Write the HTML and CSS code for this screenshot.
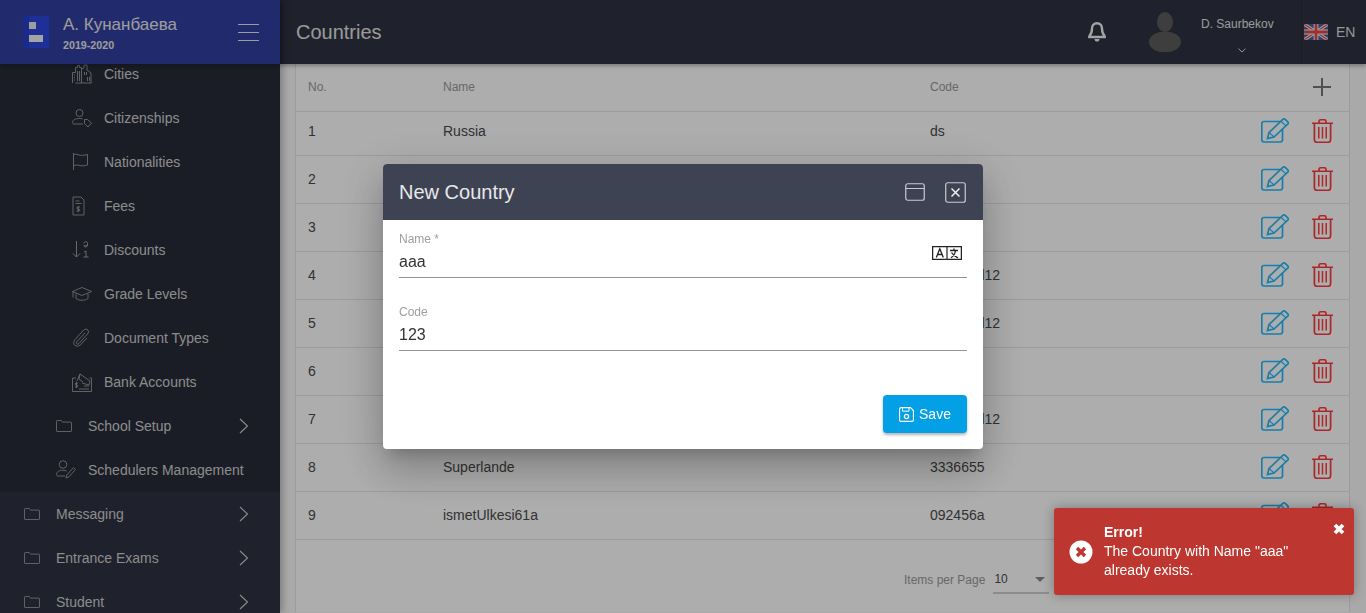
FILE: index.html
```html
<!DOCTYPE html>
<html lang="en">

<head>
    <meta charset="UTF-8">
    <title>Countries</title>
    <link rel="stylesheet" href="styles.css">
</head>

<body>
    <svg class="sprites" xmlns="http://www.w3.org/2000/svg">
        <symbol id="i-folder" viewBox="0 0 16 12">
            <path d="M.5 11V1.200C.5.800.8.500 1.200.500h4l1.300 1.600h8.300c.4 0 .7.300.7.700V11c0 .3-.3.500-.6.500H1c-.3 0-.5-.2-.5-.5z" fill="none" stroke="currentColor" stroke-width=".8" />
        </symbol>
        <symbol id="i-chevron" viewBox="0 0 10 16">
            <path d="M1 1l7.500 7L1 15" fill="none" stroke="currentColor" stroke-width="1.100" />
        </symbol>
        <symbol id="i-edit" viewBox="0 0 28 25">
            <path d="M19 3.500H3C1.600 3.500.8 4.300.8 5.700v16.100c0 1.400.8 2.200 2.200 2.200h16.300c1.400 0 2.200-.8 2.200-2.200V11" fill="none" stroke="currentColor" stroke-width="1.700" />
            <path d="M6.500 20.500l1.500-6L21.800 1.500c.8-.7 1.700-.7 2.500 0l2.400 2.300c.7.800.7 1.700 0 2.400L13 19z" fill="none" stroke="currentColor" stroke-width="1.700" />
            <path d="M8.200 14.500l4.800 4.500M20 3.200l5 4.700" fill="none" stroke="currentColor" stroke-width="1.200" />
        </symbol>
        <symbol id="i-trash" viewBox="0 0 21 24">
            <path d="M0 4.200h21M7 4V2.500C7 1.400 7.900.7 9 .7h3c1.100 0 2 .7 2 1.800V4" fill="none" stroke="currentColor" stroke-width="1.600" />
            <path d="M2.400 4.500v16.300c0 1.500.9 2.500 2.400 2.500h11.400c1.500 0 2.400-1 2.400-2.500V4.500" fill="none" stroke="currentColor" stroke-width="1.700" />
            <path d="M6.800 8v11.500M10.500 8v11.500M14.200 8v11.500" fill="none" stroke="currentColor" stroke-width="1.500" />
        </symbol>
    </svg>

    <div class="app">
        <aside class="sidebar">
            <div class="brand">
                <svg class="brand-logo" viewBox="0 0 26 32" xmlns="http://www.w3.org/2000/svg">
                    <rect width="26" height="32" fill="#2d48e0" />
                    <rect width="6" height="32" fill="#2640c8" />
                    <rect x="6" y="6" width="7" height="7" fill="#e8e8e8" />
                    <rect x="6" y="19" width="14" height="7" fill="#f2f2f2" />
                </svg>
                <div class="brand-text">
                    <div class="brand-name">А. Кунанбаева</div>
                    <div class="brand-year">2019-2020</div>
                </div>
                <div class="burger"><span></span><span></span><span></span></div>
            </div>

            <nav class="nav">
                <div class="nav-nested">
                    <a class="nav-item level-3">
                        <svg class="nav-icon" viewBox="0 0 20 20" fill="none" stroke="currentColor" stroke-width=".8">
                            <path d="M.5 19V8.500h3V3.500h2V1.500h2v2h2v15.500M10 5l2-1V1h3v5l4 3v10M3.500 19h16M2 11h1M2 13.500h1M2 16h1M5.500 7v10M7.500 7v10M12.500 8v3M14.500 8v3M15.500 13v4M17.500 13v4" />
                        </svg>
                        <span>Cities</span>
                    </a>
                    <a class="nav-item level-3">
                        <svg class="nav-icon" viewBox="0 0 20 20" fill="none" stroke="currentColor" stroke-width=".8">
                            <circle cx="7.500" cy="5" r="3.500" />
                            <path d="M11 16H2c-.9 0-1.500-.6-1.500-1.400 0-2.500 2.500-4.100 7-4.100 1.200 0 2.300.1 3.200.4" />
                            <path d="M12.500 11.500h3l4 3.500-3.500 4-3.500-3.400z" />
                        </svg>
                        <span>Citizenships</span>
                    </a>
                    <a class="nav-item level-3">
                        <svg class="nav-icon" viewBox="0 0 20 20" fill="none" stroke="currentColor" stroke-width=".8">
                            <path d="M1.500 1v17M1.500 2.500c3-1 4 .5 7 .8s4.500-.3 7-.8V13c-3 .8-4.500 1-7 .6s-4-1-7 0" />
                        </svg>
                        <span>Nationalities</span>
                    </a>
                    <a class="nav-item level-3">
                        <svg class="nav-icon" viewBox="0 0 20 20" fill="none" stroke="currentColor" stroke-width=".8">
                            <path d="M1 1h8l3 3v15H1zM3.500 5h4M3.500 7.500h6" />
                            <path d="M8 11h-2.500c-1 0-1 2 0 2h1.500c1 0 1 2 0 2H4.500M6.200 10v6" />
                        </svg>
                        <span>Fees</span>
                    </a>
                    <a class="nav-item level-3">
                        <svg class="nav-icon" viewBox="0 0 20 20" fill="none" stroke="currentColor" stroke-width=".9">
                            <path d="M4.500 1v16M1 13.500L4.500 17 8 13.500M12 3.500c0-2.600 3.500-2.600 3.500 0v1.500c0 2.500-3.500 2.500-3.500 .5M15.500 5c-.5 1-3 1-3.500 0M12 12l2-1v6M11.500 17h5" />
                        </svg>
                        <span>Discounts</span>
                    </a>
                    <a class="nav-item level-3">
                        <svg class="nav-icon" viewBox="0 0 20 20" fill="none" stroke="currentColor" stroke-width=".8">
                            <path d="M.5 7.500L10 3.500l9.500 4-9.500 4zM4 9.500v5c3 2.400 9 2.400 12 0v-5M1 8v5.500" />
                        </svg>
                        <span>Grade Levels</span>
                    </a>
                    <a class="nav-item level-3">
                        <svg class="nav-icon" viewBox="0 0 20 20" fill="none" stroke="currentColor" stroke-width=".8">
                            <path d="M13 5L5 13.500c-1.500 2 .5 3.500 2 2L15.500 6c3-3.500-1.500-6.500-4-3.800L3 11.500c-3.800 4.500 1.500 9 5.500 5.300L15 10" />
                        </svg>
                        <span>Document Types</span>
                    </a>
                    <a class="nav-item level-3">
                        <svg class="nav-icon" viewBox="0 0 20 20" fill="none" stroke="currentColor" stroke-width=".8">
                            <path d="M4 6H.5v13.500h19V6h-2M5 9l3-7 10 7-1 4-7-2M8 2l-1 5 4 3M12 14l5 0M7 17h10" />
                            <path d="M6 11H4c-1 0-1 2 0 2h1c1 0 1 2 0 2H3M4.500 10v6" />
                        </svg>
                        <span>Bank Accounts</span>
                    </a>
                    <a class="nav-item level-2">
                        <svg class="nav-folder"><use href="#i-folder" /></svg>
                        <span>School Setup</span>
                        <svg class="nav-chevron"><use href="#i-chevron" /></svg>
                    </a>
                    <a class="nav-item level-2">
                        <svg class="nav-icon" viewBox="0 0 20 20" fill="none" stroke="currentColor" stroke-width=".8">
                            <circle cx="7" cy="4.500" r="3.800" />
                            <path d="M9 16H2c-.9 0-1.500-.6-1.500-1.400 0-2.700 2.500-4.300 6.500-4.300 1.500 0 2.800.3 3.700.7" />
                            <path d="M10 18l.8-3 6.200-7c.6-.6 2.700 1 2.200 1.800l-6.200 7z" />
                        </svg>
                        <span>Schedulers Management</span>
                    </a>
                </div>
                <a class="nav-item level-1">
                    <svg class="nav-folder"><use href="#i-folder" /></svg>
                    <span>Messaging</span>
                    <svg class="nav-chevron"><use href="#i-chevron" /></svg>
                </a>
                <a class="nav-item level-1">
                    <svg class="nav-folder"><use href="#i-folder" /></svg>
                    <span>Entrance Exams</span>
                    <svg class="nav-chevron"><use href="#i-chevron" /></svg>
                </a>
                <a class="nav-item level-1">
                    <svg class="nav-folder"><use href="#i-folder" /></svg>
                    <span>Student</span>
                    <svg class="nav-chevron"><use href="#i-chevron" /></svg>
                </a>
            </nav>
        </aside>

        <div class="main">
            <header class="topbar">
                <h1 class="page-title">Countries</h1>
                <svg class="bell" viewBox="0 0 18 20" xmlns="http://www.w3.org/2000/svg">
                    <path d="M9 1.200c-3.200 0-5 2.300-5 5.300 0 4-1 6-2.700 7.800v.7h15.400v-.7C15 12.500 14 10.500 14 6.500c0-3-1.800-5.300-5-5.300z" fill="none" stroke="currentColor" stroke-width="2.400" />
                    <path d="M6.500 17h5c0 1.600-1 2.600-2.500 2.600S6.500 18.600 6.500 17z" fill="currentColor" />
                </svg>
                <svg class="avatar" viewBox="0 0 34 40" xmlns="http://www.w3.org/2000/svg">
                    <ellipse cx="17" cy="10" rx="8" ry="10" fill="#5c5c5c" />
                    <ellipse cx="17" cy="30" rx="16" ry="10.500" fill="#5c5c5c" />
                </svg>
                <div class="user">
                    <div class="user-name">D. Saurbekov</div>
                    <svg class="user-caret" viewBox="0 0 8 5" xmlns="http://www.w3.org/2000/svg">
                        <path d="M.5.700L4 4 7.500.700" fill="none" stroke="currentColor" />
                    </svg>
                </div>
                <div class="lang">
                    <svg class="flag" viewBox="0 0 60 40" xmlns="http://www.w3.org/2000/svg">
                        <rect width="60" height="40" fill="#4a5a9c" />
                        <path d="M0 0l60 40M60 0L0 40" stroke="#ececec" stroke-width="8" />
                        <path d="M0 0l60 40M60 0L0 40" stroke="#e04a4a" stroke-width="3" />
                        <path d="M30 0v40M0 20h60" stroke="#ececec" stroke-width="12" />
                        <path d="M30 0v40M0 20h60" stroke="#e04a4a" stroke-width="7" />
                    </svg>
                    <span>EN</span>
                </div>
            </header>

            <section class="content">
                <div class="card">
                    <div class="row row-head">
                        <div>No.</div>
                        <div>Name</div>
                        <div>Code</div>
                        <div class="add-cell"><span class="add-btn"></span></div>
                    </div>
                    <div class="row row-clipped">
                        <div>1</div>
                        <div>Russia</div>
                        <div>ds</div>
                        <div class="actions"><svg class="edit"><use href="#i-edit" /></svg><svg class="trash"><use href="#i-trash" /></svg></div>
                    </div>
                    <div class="row">
                        <div>2</div>
                        <div></div>
                        <div></div>
                        <div class="actions"><svg class="edit"><use href="#i-edit" /></svg><svg class="trash"><use href="#i-trash" /></svg></div>
                    </div>
                    <div class="row">
                        <div>3</div>
                        <div></div>
                        <div></div>
                        <div class="actions"><svg class="edit"><use href="#i-edit" /></svg><svg class="trash"><use href="#i-trash" /></svg></div>
                    </div>
                    <div class="row">
                        <div>4</div>
                        <div></div>
                        <div>123123d12</div>
                        <div class="actions"><svg class="edit"><use href="#i-edit" /></svg><svg class="trash"><use href="#i-trash" /></svg></div>
                    </div>
                    <div class="row">
                        <div>5</div>
                        <div></div>
                        <div>123123d12</div>
                        <div class="actions"><svg class="edit"><use href="#i-edit" /></svg><svg class="trash"><use href="#i-trash" /></svg></div>
                    </div>
                    <div class="row">
                        <div>6</div>
                        <div></div>
                        <div></div>
                        <div class="actions"><svg class="edit"><use href="#i-edit" /></svg><svg class="trash"><use href="#i-trash" /></svg></div>
                    </div>
                    <div class="row">
                        <div>7</div>
                        <div></div>
                        <div>123123d12</div>
                        <div class="actions"><svg class="edit"><use href="#i-edit" /></svg><svg class="trash"><use href="#i-trash" /></svg></div>
                    </div>
                    <div class="row">
                        <div>8</div>
                        <div>Superlande</div>
                        <div>3336655</div>
                        <div class="actions"><svg class="edit"><use href="#i-edit" /></svg><svg class="trash"><use href="#i-trash" /></svg></div>
                    </div>
                    <div class="row">
                        <div>9</div>
                        <div>ismetUlkesi61a</div>
                        <div>092456a</div>
                        <div class="actions"><svg class="edit"><use href="#i-edit" /></svg><svg class="trash"><use href="#i-trash" /></svg></div>
                    </div>
                    <div class="paginator">
                        <span class="page-label">Items per Page</span>
                        <div class="page-select"><span>10</span><i class="page-arrow"></i></div>
                    </div>
                </div>
            </section>
        </div>
    </div>

    <div class="backdrop">
        <div class="dialog">
            <div class="dialog-head">
                <h2 class="dialog-title">New Country</h2>
                <svg class="dialog-max" viewBox="0 0 20 18" xmlns="http://www.w3.org/2000/svg">
                    <rect x=".75" y=".75" width="18.500" height="16.500" rx="2" fill="none" stroke="currentColor" stroke-width="1.200" />
                    <path d="M.75 5.500h18.500" stroke="currentColor" stroke-width="1.200" />
                </svg>
                <svg class="dialog-close" viewBox="0 0 21 21" xmlns="http://www.w3.org/2000/svg">
                    <rect x=".75" y=".75" width="19.500" height="19.500" rx="2" fill="none" stroke="currentColor" stroke-width="1.200" />
                    <path d="M6.500 6.500l8 8M14.500 6.500l-8 8" stroke="#f0f0f0" stroke-width="1.500" />
                </svg>
            </div>
            <div class="dialog-body">
                <div class="field">
                    <label class="field-label">Name *</label>
                    <div class="field-value">aaa</div>
                    <svg class="translate" viewBox="0 0 30 14" xmlns="http://www.w3.org/2000/svg">
                        <rect x=".6" y=".6" width="28.800" height="12.800" fill="none" stroke="#222" stroke-width="1.300" />
                        <path d="M15 0v14" stroke="#222" stroke-width="1.200" />
                        <path d="M4.300 11.500L7.800 2.800l3.500 8.700M5.600 8.500h4.400" fill="none" stroke="#222" stroke-width="1.300" />
                        <path d="M18 4.500h8M22 2.500v2M19 11.800c2.500-1.500 4-3.800 4.500-7.300M19.500 6.500c1.500 2.500 3.500 4 6.500 5.300" fill="none" stroke="#222" stroke-width="1.300" />
                    </svg>
                </div>
                <div class="field">
                    <label class="field-label">Code</label>
                    <div class="field-value">123</div>
                </div>
                <div class="dialog-actions">
                    <button class="save-btn">
                        <svg class="save-icon" viewBox="0 0 15 15" xmlns="http://www.w3.org/2000/svg">
                            <path d="M.6 2C.6 1.200 1.200.6 2 .6h9.500l2.900 2.900V13c0 .8-.6 1.400-1.400 1.400H2c-.8 0-1.400-.6-1.400-1.400z" fill="none" stroke="currentColor" stroke-width="1.100" />
                            <path d="M3.500.8v3.400h6.500V.8" fill="none" stroke="currentColor" />
                            <circle cx="7.500" cy="9.500" r="2.100" fill="none" stroke="currentColor" stroke-width="1.300" />
                        </svg>
                        Save
                    </button>
                </div>
            </div>
        </div>
    </div>

    <div class="toast">
        <svg class="toast-icon" viewBox="0 0 24 24" xmlns="http://www.w3.org/2000/svg">
            <circle cx="12" cy="12" r="11.500" fill="#fff" />
            <path d="M8 8l8 8M16 8l-8 8" stroke="#bd362f" stroke-width="3.400" />
        </svg>
        <div class="toast-text">
            <div class="toast-title">Error!</div>
            <div>The Country with Name "aaa" already exists.</div>
        </div>
        <svg class="toast-close" viewBox="0 0 12 12" xmlns="http://www.w3.org/2000/svg">
            <path d="M2 2l8 8M10 2l-8 8" stroke="#fff" stroke-width="3.800" />
        </svg>
    </div>
</body>

</html>
```

FILE: styles.css
```css
* {
    box-sizing: border-box;
}

html,
body {
    height: 100%;
    margin: 0;
    overflow: hidden;
}

body {
    font-family: 'Liberation Sans', Arial, sans-serif;
    font-size: 14px;
    color: #222;
}

.sprites {
    display: none;
}

.app {
    display: flex;
    height: 100vh;
    background: #fafafa;
}

/* sidebar */
.sidebar {
    width: 280px;
    flex-shrink: 0;
    display: flex;
    flex-direction: column;
    background: #2e3241;
    box-shadow: 2px 0 8px rgba(0, 0, 0, 0.3);
    position: relative;
    z-index: 2;
}

.brand {
    height: 64px;
    flex-shrink: 0;
    display: flex;
    align-items: center;
    padding: 0 21px 0 23px;
    background: #333fa3;
    color: #eee;
    position: relative;
    box-shadow: 0 2px 5px rgba(0, 0, 0, 0.3);
    z-index: 1;
}

.brand-logo {
    width: 26px;
    height: 32px;
}

.brand-text {
    margin-left: 14px;
    flex: 1;
    padding-top: 2px;
}

.brand-name {
    font-size: 17px;
    line-height: 20px;
    color: #e6e6e6;
}

.brand-year {
    font-size: 10.7px;
    font-weight: 700;
    line-height: 14px;
    margin-top: 3px;
    color: #e6e6e6;
}

.burger span {
    display: block;
    width: 21px;
    height: 1px;
    margin: 7px 0;
    background: #e6e6e6;
}

.nav {
    flex: 1;
    overflow: hidden;
    margin-top: -12px;
}

.nav-nested {
    background: #282c38;
}

.nav-item {
    height: 44px;
    display: flex;
    align-items: center;
    color: #cfcfcf;
    font-size: 14px;
}

.level-3 {
    padding-left: 72px;
}

.level-2 {
    padding-left: 56px;
}

.level-1 {
    padding-left: 24px;
}

.nav-icon {
    width: 20px;
    height: 20px;
    margin-right: 12px;
    color: #a8a8a8;
}

.nav-folder {
    width: 16px;
    height: 12px;
    margin-right: 16px;
    color: #a8a8a8;
}

.nav-chevron {
    width: 10px;
    height: 16px;
    margin-left: auto;
    margin-right: 31px;
    color: #cfcfcf;
}

/* top bar */
.main {
    flex: 1;
    min-width: 0;
    display: flex;
    flex-direction: column;
}

.topbar {
    height: 64px;
    flex-shrink: 0;
    display: flex;
    align-items: center;
    padding-left: 16px;
    background: #2e3241;
    color: #e6e6e6;
    box-shadow: 0 2px 4px rgba(0, 0, 0, 0.3);
    position: relative;
    z-index: 1;
}

.page-title {
    flex: 1;
    margin: 0;
    font-size: 20px;
    font-weight: 400;
    color: #e2e2e2;
}

.bell {
    width: 18px;
    height: 20px;
    margin-right: 42px;
    color: #f0f0f0;
}

.avatar {
    width: 34px;
    height: 40px;
    margin-right: 19px;
}

.user {
    width: 71px;
    margin-right: 29px;
    padding-top: 6px;
    text-align: center;
    white-space: nowrap;
}

.user-name {
    font-size: 12px;
    line-height: 14px;
    margin-bottom: 17px;
    color: #e2e2e2;
}

.user-caret {
    display: block;
    width: 8px;
    height: 5px;
    margin-left: 37px;
    color: #e2e2e2;
}

.lang {
    width: 65px;
    height: 64px;
    display: flex;
    align-items: center;
    padding-left: 2px;
    border-left: 1px solid #262a36;
    color: #dedede;
}

.flag {
    width: 24px;
    height: 16px;
    margin-right: 8px;
}

/* table */
.content {
    flex: 1;
    min-height: 0;
    padding: 0 16px 0 15px;
}

.card {
    background: #fff;
    border-left: 1px solid #e6e6e6;
    border-right: 1px solid #e6e6e6;
}

.row {
    height: 48px;
    display: grid;
    grid-template-columns: 135px 487px 331px 1fr;
    align-items: center;
    padding: 0 0 2px 12px;
    border-bottom: 1px solid #e6e6e6;
    color: #4a4a4a;
}

.row-head {
    font-size: 12px;
    color: #9a9a9a;
}

.row-clipped {
    height: 44px;
    padding-bottom: 6px;
}

.add-cell {
    display: flex;
    justify-content: flex-end;
    padding-right: 18px;
}

.add-btn {
    width: 18px;
    height: 18px;
    background:
        linear-gradient(#767676, #767676) center / 18px 2px no-repeat,
        linear-gradient(#767676, #767676) center / 2px 18px no-repeat;
}

.actions {
    display: flex;
    align-items: center;
    gap: 23px;
}

.edit {
    width: 28px;
    height: 25px;
    color: #27b8fb;
}

.trash {
    width: 21px;
    height: 24px;
    color: #ff3a3c;
}

.paginator {
    height: 72px;
    display: flex;
    align-items: center;
    padding: 8px 0 0 608px;
}

.page-label {
    font-size: 12px;
    color: #9a9a9a;
    margin-right: 8px;
}

.page-select {
    width: 56px;
    height: 28px;
    display: flex;
    align-items: center;
    justify-content: space-between;
    padding: 0 4px 0 1px;
    font-size: 12px;
    color: #4a4a4a;
    border-bottom: 2px solid #cfcfcf;
}

.page-arrow {
    width: 0;
    height: 0;
    border-left: 5px solid transparent;
    border-right: 5px solid transparent;
    border-top: 5px solid #8a8a8a;
}

/* dialog */
.backdrop {
    position: fixed;
    inset: 0;
    z-index: 10;
    display: flex;
    align-items: center;
    justify-content: center;
    background: rgba(0, 0, 0, 0.32);
}

.dialog {
    width: 600px;
    height: 285px;
    border-radius: 4px;
    background: #fff;
    overflow: hidden;
    box-shadow: 0 11px 15px -7px rgba(0, 0, 0, 0.2), 0 24px 38px 3px rgba(0, 0, 0, 0.14), 0 9px 46px 8px rgba(0, 0, 0, 0.12);
}

.dialog-head {
    height: 56px;
    display: flex;
    align-items: center;
    padding: 0 17px 0 16px;
    background: #3e4354;
    color: #c8cad0;
}

.dialog-title {
    flex: 1;
    margin: 0;
    font-size: 20px;
    font-weight: 400;
    color: #e8e8e8;
}

.dialog-max {
    width: 20px;
    height: 18px;
    margin-right: 20px;
}

.dialog-close {
    width: 21px;
    height: 21px;
}

.dialog-body {
    padding: 12px 16px 16px;
}

.field {
    position: relative;
    height: 46px;
    margin-bottom: 27px;
    border-bottom: 1px solid #949494;
}

.field-label {
    display: block;
    font-size: 12px;
    line-height: 14px;
    margin-bottom: 4px;
    color: #9e9e9e;
}

.field-value {
    font-size: 16px;
    line-height: 24px;
    color: #333;
}

.translate {
    position: absolute;
    right: 5px;
    top: 14px;
    width: 30px;
    height: 14px;
}

.dialog-actions {
    display: flex;
    justify-content: flex-end;
    margin-top: 44px;
}

.save-btn {
    width: 84px;
    height: 38px;
    display: flex;
    align-items: center;
    justify-content: center;
    gap: 5px;
    border: none;
    border-radius: 4px;
    font-family: inherit;
    font-size: 14px;
    font-weight: 500;
    color: #fff;
    background: #03a0e6;
    box-shadow: 0 2px 3px rgba(0, 0, 0, 0.3);
}

.save-icon {
    width: 15px;
    height: 15px;
}

/* toast */
.toast {
    position: fixed;
    right: 12px;
    bottom: 18px;
    z-index: 20;
    width: 300px;
    height: 87px;
    display: flex;
    align-items: center;
    padding-left: 15px;
    border-radius: 3px;
    background: #bd362f;
    color: #fff;
    line-height: 19px;
    box-shadow: 0 0 12px rgba(0, 0, 0, 0.3);
}

.toast-icon {
    width: 24px;
    height: 24px;
    flex-shrink: 0;
    margin-right: 11px;
}

.toast-text {
    width: 210px;
}

.toast-title {
    font-weight: 700;
}

.toast-close {
    position: absolute;
    top: 15px;
    right: 9px;
    width: 12px;
    height: 12px;
}
```
